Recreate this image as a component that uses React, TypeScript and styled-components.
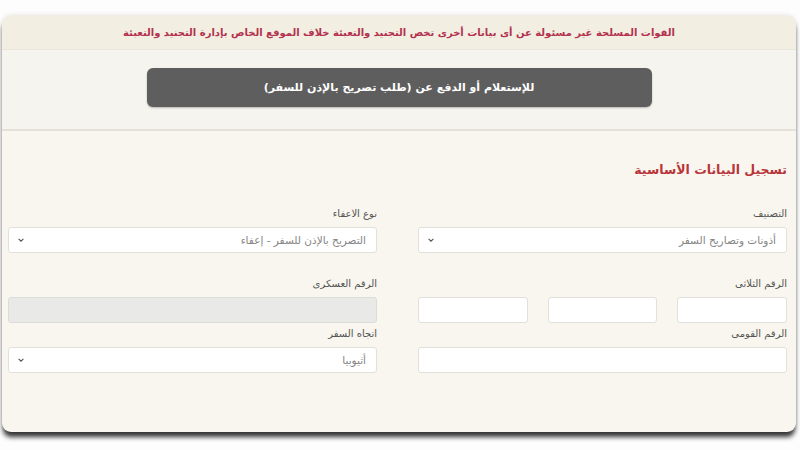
import React from 'react';
import styled, { createGlobalStyle } from 'styled-components';

const GlobalStyle = createGlobalStyle`
  html, body {
    margin: 0;
    padding: 0;
    background: #ffffff;
  }
  body {
    font-family: 'DejaVu Sans', 'Noto Sans', sans-serif;
  }
`;

const Page = styled.div`
  width: 800px;
  height: 450px;
  padding: 15px 4px 0 2px;
  box-sizing: border-box;
  background: #fdfdfd;
`;

const Panel = styled.div`
  direction: rtl;
  background: #f8f6ee;
  border-radius: 9px;
  overflow: hidden;
  height: 417px;
  box-shadow: 0 6px 5px -1px rgba(0, 0, 0, 0.8), 0 -1px 4px rgba(0, 0, 0, 0.07);
  display: flex;
  flex-direction: column;
`;

const Notice = styled.div`
  height: 35px;
  background: #f2efe2;
  border-bottom: 1px solid #e9e6da;
  display: flex;
  align-items: center;
  justify-content: center;
  color: #b3324f;
  font-size: 10px;
  font-weight: bold;
  padding-top: 1px;
  box-sizing: border-box;
`;

const ActionArea = styled.div`
  background: #f6f4ee;
  padding: 18px 0 22px;
  border-bottom: 2px solid #e4e1d9;
  display: flex;
  justify-content: center;
`;

const InquiryButton = styled.button`
  width: 505px;
  height: 39px;
  background: #5e5e5e;
  color: #ffffff;
  border: none;
  border-radius: 6px;
  font-family: 'DejaVu Sans', sans-serif;
  font-size: 11px;
  font-weight: bold;
  cursor: pointer;
  box-shadow: 0 1px 2px rgba(0, 0, 0, 0.25);
`;

const Form = styled.div`
  padding: 29px 9px 0 6px;
`;

const FormTitle = styled.h3`
  margin: 0 0 27px;
  color: #b8353a;
  font-size: 12.5px;
  font-weight: bold;
  line-height: 20px;
`;

const FieldGrid = styled.div`
  display: grid;
  grid-template-columns: 1fr 1fr;
  column-gap: 41px;
`;

const Field = styled.div<{ $top: number }>`
  margin-top: ${(p) => p.$top}px;
  display: flex;
  flex-direction: column;
`;

const Label = styled.label`
  font-size: 10px;
  color: #555555;
  line-height: 14px;
  margin-bottom: 6px;
`;

const SelectBox = styled.div`
  height: 26px;
  background: #ffffff;
  border: 1px solid #e2e0da;
  border-radius: 3px;
  box-sizing: border-box;
  display: flex;
  align-items: center;
  justify-content: space-between;
  padding: 0 10px 0 8px;
  font-size: 10.5px;
  color: #858585;
`;

const Chevron = styled.svg`
  width: 8px;
  height: 8px;
  flex: none;
`;

const TextBox = styled.div<{ $disabled?: boolean }>`
  flex: 1;
  height: 26px;
  background: ${(p) => (p.$disabled ? '#e9e9e7' : '#ffffff')};
  border: 1px solid ${(p) => (p.$disabled ? '#dcdcda' : '#e2e0da')};
  border-radius: 3px;
  box-sizing: border-box;
`;

const TripleRow = styled.div`
  display: flex;
  gap: 20px;
`;

const Select = ({ value }: { value: string }) => (
  <SelectBox>
    <span>{value}</span>
    <Chevron viewBox="0 0 10 10">
      <path d="M2 3.5 L5 6.5 L8 3.5" fill="none" stroke="#555" strokeWidth="1.4" />
    </Chevron>
  </SelectBox>
);

const App: React.FC = () => {
  return (
    <Page>
      <GlobalStyle />
      <Panel>
        <Notice>
          القوات المسلحة غير مسئولة عن أى بيانات أخرى تخص التجنيد والتعبئة خلاف الموقع الخاص بإدارة التجنيد والتعبئة
        </Notice>
        <ActionArea>
          <InquiryButton>للإستعلام أو الدفع عن (طلب تصريح بالإذن للسفر)</InquiryButton>
        </ActionArea>
        <Form>
          <FormTitle>تسجيل البيانات الأساسية</FormTitle>
          <FieldGrid>
            <Field $top={0}>
              <Label>التصنيف</Label>
              <Select value="أذونات وتصاريح السفر" />
            </Field>
            <Field $top={0}>
              <Label>نوع الاعفاء</Label>
              <Select value="التصريح بالإذن للسفر - إعفاء" />
            </Field>
            <Field $top={24}>
              <Label>الرقم الثلاثى</Label>
              <TripleRow>
                <TextBox />
                <TextBox />
                <TextBox />
              </TripleRow>
            </Field>
            <Field $top={24}>
              <Label>الرقم العسكرى</Label>
              <TextBox $disabled />
            </Field>
            <Field $top={4}>
              <Label>الرقم القومى</Label>
              <TextBox />
            </Field>
            <Field $top={4}>
              <Label>اتجاه السفر</Label>
              <Select value="أثيوبيا" />
            </Field>
          </FieldGrid>
        </Form>
      </Panel>
    </Page>
  );
};

export default App;
